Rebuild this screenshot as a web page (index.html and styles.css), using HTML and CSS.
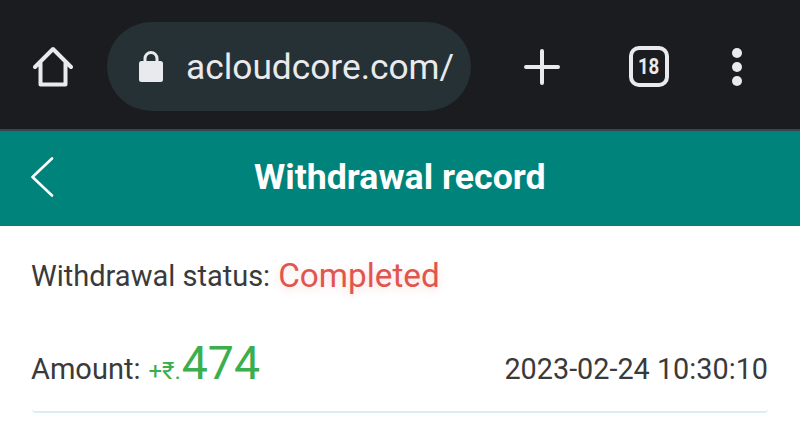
FILE: index.html
```html
<!DOCTYPE html>
<html lang="en">

<head>
    <meta charset="UTF-8">
    <meta name="viewport" content="width=device-width, initial-scale=1.0">
    <title>Withdrawal record</title>
    <link rel="stylesheet" href="styles.css">
</head>

<body>
    <div class="toolbar">
        <svg class="home-icon" width="40" height="41" viewBox="0 0 40 41">
            <path d="M2 21 L20 3 L38 21 M7.5 17 V38.5 H32.5 V17" fill="none" stroke="#e8eaed" stroke-width="4" stroke-linecap="round" stroke-linejoin="round" />
        </svg>
        <div class="url-pill">
            <svg class="lock-icon" width="24" height="33" viewBox="0 0 24 33">
                <path d="M6 14 V8.5 a6 6 0 0 1 12 0 V14" fill="none" stroke="#e8eaed" stroke-width="3" />
                <rect x="0" y="11" width="24" height="21" rx="2.5" fill="#e8eaed" />
            </svg>
            <span class="url-text">acloudcore.com/</span>
        </div>
        <svg class="plus-icon" width="36" height="36" viewBox="0 0 36 36">
            <path d="M18 2 V34 M2 18 H34" stroke="#e8eaed" stroke-width="4" stroke-linecap="round" />
        </svg>
        <div class="tab-count"><span>18</span></div>
        <div class="menu-dots">
            <span></span>
            <span></span>
            <span></span>
        </div>
    </div>

    <div class="header">
        <svg class="back-icon" width="24" height="40" viewBox="0 0 24 40">
            <path d="M22 1.5 L2.5 20 L22 38.5" fill="none" stroke="#fff" stroke-width="2.6" stroke-linecap="round" stroke-linejoin="round" />
        </svg>
        <h1>Withdrawal record</h1>
    </div>

    <div class="record">
        <div class="status-row">
            <span class="label">Withdrawal status:</span>
            <span class="status">Completed</span>
        </div>
        <div class="amount-row">
            <div class="amount-info">
                <span class="label">Amount:</span>
                <span class="currency">+₹.</span><span class="amount">474</span>
            </div>
            <span class="date">2023-02-24 10:30:10</span>
        </div>
    </div>
</body>

</html>
```

FILE: styles.css
```css
body {
    font-family: 'Roboto', sans-serif;
    background-color: #fff;
    margin: 0;
    padding: 0;
    overflow: hidden;
}

.toolbar {
    display: flex;
    align-items: center;
    height: 129px;
    padding-left: 33px;
    box-sizing: border-box;
    background-color: #1a1c1f;
}

.home-icon {
    flex: none;
    margin-top: 4px;
}

.url-pill {
    display: flex;
    align-items: center;
    width: 364px;
    height: 89px;
    margin-left: 34px;
    margin-top: 4px;
    padding-left: 32px;
    box-sizing: border-box;
    background-color: #263136;
    border-radius: 45px;
}

.url-text {
    margin-left: 23px;
    color: #e8eaed;
    font-size: 35.3px;
    white-space: nowrap;
}

.plus-icon {
    flex: none;
    margin-left: 53px;
    margin-top: 4px;
}

.tab-count {
    width: 40px;
    height: 41px;
    margin-left: 69px;
    margin-top: 4px;
    box-sizing: border-box;
    border: 4px solid #e8eaed;
    border-radius: 10px;
    color: #e8eaed;
    font-size: 22px;
    font-weight: bold;
    line-height: 33px;
    text-align: center;
}

.tab-count span {
    display: inline-block;
    transform: scaleX(0.85);
}

.menu-dots {
    display: flex;
    flex-direction: column;
    gap: 4px;
    margin-left: 63px;
    margin-top: 4px;
}

.menu-dots span {
    width: 10px;
    height: 10px;
    background-color: #e8eaed;
    border-radius: 50%;
}

.header {
    display: flex;
    align-items: center;
    height: 97px;
    padding-left: 30px;
    padding-bottom: 3px;
    box-sizing: border-box;
    background-color: #00837b;
    border-top: 2px solid #37474f;
}

h1 {
    margin: 0 0 0 200px;
    color: #fff;
    font-size: 35.7px;
    font-weight: bold;
}

.record {
    margin: 0 32px;
    padding-bottom: 21px;
    border-bottom: 2px solid #d5f0ee;
    border-radius: 0 0 4px 4px;
}

.status-row {
    display: flex;
    align-items: center;
    gap: 8px;
    margin-left: -1px;
    padding-top: 30px;
}

.label {
    color: #3a3a3a;
    font-size: 29px;
}

.status {
    color: #e0564f;
    font-size: 33.3px;
    text-shadow: 0 3px 8px rgba(226, 80, 74, 0.2);
}

.amount-row {
    display: flex;
    justify-content: space-between;
    align-items: baseline;
    margin-top: 41px;
}

.amount-info {
    margin-left: -1px;
}

.currency {
    margin-left: 4px;
    color: #3bae4e;
    font-size: 24px;
}

.amount {
    margin-left: 1px;
    color: #3bae4e;
    font-size: 46.5px;
}

.date {
    color: #3a3a3a;
    font-size: 28.8px;
}
```
